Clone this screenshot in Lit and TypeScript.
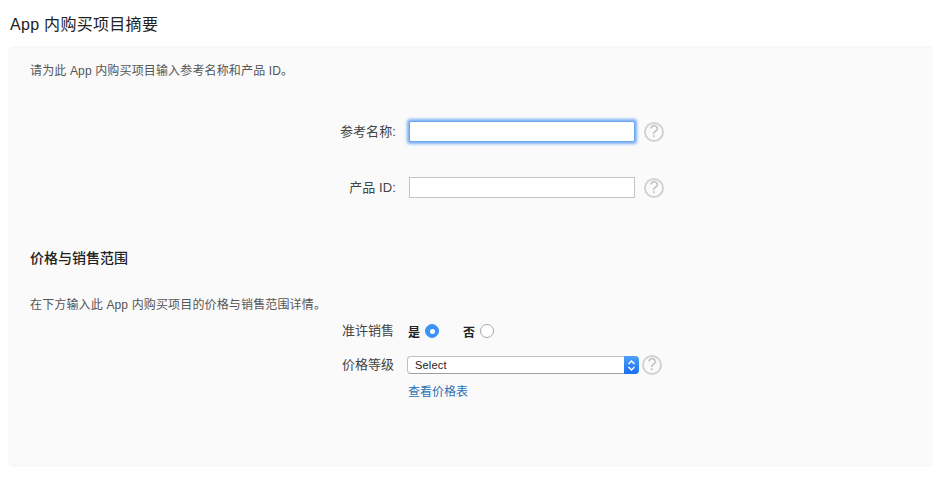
import { LitElement, html, css, svg } from "lit";
import { customElement } from "lit/decorators.js";

const FONT = css`"Liberation Sans", "Noto Sans CJK SC", sans-serif`;

const help = () => html`<span class="help">?</span>`;

@customElement("app-root")
export class AppRoot extends LitElement {
  static styles = css`
    :host { display: block; width: 933px; height: 485px; background: #fff; font-family: ${FONT}; overflow: hidden; box-sizing: border-box; padding: 15px 0 0 10px; }
    * { box-sizing: border-box; }
    h1 { margin: 0; font-size: 16px; line-height: 20px; font-weight: 400; color: #222; letter-spacing: 0.3px; }
    .panel { margin-top: 13px; height: 417px; background: #fafafa; box-shadow: 0 0 3px rgba(0,0,0,.1); padding: 15px 20px 0; }
    p { margin: 0; font-size: 12px; line-height: 16px; color: #555; letter-spacing: .15px; }
    .form { margin-top: 42px; display: grid; grid-template-columns: 379px 226px 30px; justify-content: start; grid-auto-rows: 21px; row-gap: 35px; align-items: center; }
    .label { font-size: 13px; color: #444; text-align: right; padding: 0 13px 2px 0; white-space: nowrap; letter-spacing: .1px; }
    input { display: block; width: 226px; height: 21px; border: 1px solid #c4c4c4; background: #fff; margin: 0; padding: 0 4px; outline: none; border-radius: 0; }
    input.focus { border: 1px solid #6aa8f0; box-shadow: 0 0 3px 1.5px rgba(90,155,240,.8); border-radius: 2px; }
    .help { display: flex; width: 20px; height: 20px; border: 2px solid #d2d2d2; border-radius: 50%; align-items: center; justify-content: center; color: #bdbdbd; background: transparent; font-size: 16px; font-weight: 400; line-height: 1; flex: none; }
    .form .help { margin-left: 9px; }
    h2 { margin: 50px 0 0; font-size: 14px; line-height: 20px; font-weight: 500; color: #222; }
    .sec-p { margin-top: 29px; }
    .rows { display: grid; grid-template-columns: 377px auto; justify-content: start; margin-top: 8px; row-gap: 14px; align-items: center; }
    .rlabel { font-size: 13px; color: #444; text-align: right; padding-right: 13px; white-space: nowrap; line-height: 20px; }
    .radios { display: flex; align-items: center; height: 20px; font-size: 12px; font-weight: 700; color: #222; padding-left: 1px; }
    .radio { width: 14px; height: 14px; margin: 0 24px 0 5px; border-radius: 50%; border: 1px solid #a8a8a8; background: #fff; flex: none; display: flex; align-items: center; justify-content: center; }
    .radio.on { background: #3b93f7; border-color: #3b93f7; }
    .radio.on::after { content: ""; width: 5px; height: 5px; border-radius: 50%; background: #fff; }
    .ctl { display: flex; align-items: center; }
    .select { display: flex; width: 232px; height: 18px; }
    .select select { appearance: none; -webkit-appearance: none; flex: 1; min-width: 0; height: 18px; border: 1px solid #c0c0c0; border-right: 0; border-bottom-color: #a0a0a0; border-radius: 4px 0 0 4px; background: #fff; font: 11px ${FONT}; letter-spacing: .2px; color: #222; padding: 0 0 0 7px; margin: 0; outline: none; }
    .arrow { width: 15px; height: 18px; border-radius: 0 4px 4px 0; background: linear-gradient(#4fa0f8, #1a6ef0); display: flex; align-items: center; justify-content: center; flex: none; }
    .ctl .help { margin-left: 3px; }
    a { grid-column: 2; font-size: 12px; line-height: 16px; color: #2a70b4; text-decoration: none; margin-top: -5px; padding-left: 1px; }
  `;

  render() {
    return html`
      <h1>App 内购买项目摘要</h1>
      <div class="panel">
        <p>请为此 App 内购买项目输入参考名称和产品 ID。</p>
        <div class="form">
          <label class="label">参考名称:</label>
          <input class="focus" type="text" />
          ${help()}
          <label class="label">产品 ID:</label>
          <input type="text" />
          ${help()}
        </div>
        <h2>价格与销售范围</h2>
        <p class="sec-p">在下方输入此 App 内购买项目的价格与销售范围详情。</p>
        <div class="rows">
          <span class="rlabel">准许销售</span>
          <div class="radios">是<span class="radio on"></span>否<span class="radio"></span></div>
          <span class="rlabel">价格等级</span>
          <div class="ctl">
            <div class="select">
              <select><option>Select</option></select>
              <span class="arrow">
                <svg width="9" height="13" viewBox="0 0 9 13" fill="none" stroke="#fff" stroke-width="1.4">
                  ${svg`<path d="M1.5 5 4.5 2 7.5 5M1.5 8 4.5 11 7.5 8"/>`}
                </svg>
              </span>
            </div>
            ${help()}
          </div>
          <a href="#">查看价格表</a>
        </div>
      </div>
    `;
  }
}
